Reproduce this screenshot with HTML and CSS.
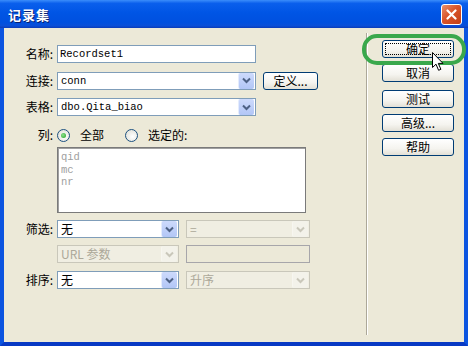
FILE: index.html
```html
<!DOCTYPE html>
<html lang="zh-CN">
<head>
    <meta charset="UTF-8">
    <title>记录集</title>
    <link rel="stylesheet" href="styles.css">
</head>
<body>
    <div class="window">
        <!-- Title bar -->
        <div class="titlebar">
            <span class="title">记录集</span>
            <span class="close-btn">
                <svg width="11" height="11" viewBox="0 0 11 11"><path d="M1.5 1.5 L9.5 9.5 M9.5 1.5 L1.5 9.5" stroke="#fff" stroke-width="2.2" stroke-linecap="round"/></svg>
            </span>
        </div>

        <div class="frame">
            <!-- Form fields on the left -->
            <div class="form-area">
                <div class="row row-name">
                    <label class="label">名称:</label>
                    <div class="textbox wide mono">Recordset1</div>
                </div>
                <div class="row row-conn">
                    <label class="label">连接:</label>
                    <div class="combo wide">
                        <span class="combo-text mono">conn</span>
                        <span class="combo-arrow"><svg width="9" height="7" viewBox="0 0 9 7"><path d="M1 1.5 L4.5 5 L8 1.5" fill="none" stroke="#4d6185" stroke-width="2"/></svg></span>
                    </div>
                    <div class="btn btn-define">定义...</div>
                </div>
                <div class="row row-table">
                    <label class="label">表格:</label>
                    <div class="combo wide">
                        <span class="combo-text mono">dbo.Qita_biao</span>
                        <span class="combo-arrow"><svg width="9" height="7" viewBox="0 0 9 7"><path d="M1 1.5 L4.5 5 L8 1.5" fill="none" stroke="#4d6185" stroke-width="2"/></svg></span>
                    </div>
                </div>
                <div class="row row-cols">
                    <label class="label">列:</label>
                    <span class="radio checked"></span>
                    <span class="radio-text">全部</span>
                    <span class="radio"></span>
                    <span class="radio-text">选定的:</span>
                </div>
                <div class="row row-list">
                    <span class="label"></span>
                    <div class="listbox mono">
                        <div>qid</div>
                        <div>mc</div>
                        <div>nr</div>
                    </div>
                </div>
                <div class="row row-filter">
                    <label class="label">筛选:</label>
                    <div class="combo small">
                        <span class="combo-text">无</span>
                        <span class="combo-arrow"><svg width="9" height="7" viewBox="0 0 9 7"><path d="M1 1.5 L4.5 5 L8 1.5" fill="none" stroke="#4d6185" stroke-width="2"/></svg></span>
                    </div>
                    <div class="combo small2 disabled">
                        <span class="combo-text">=</span>
                        <span class="combo-arrow"><svg width="9" height="7" viewBox="0 0 9 7"><path d="M1 1.5 L4.5 5 L8 1.5" fill="none" stroke="#c9c7ba" stroke-width="2"/></svg></span>
                    </div>
                </div>
                <div class="row row-param">
                    <span class="label"></span>
                    <div class="combo small disabled">
                        <span class="combo-text">URL 参数</span>
                        <span class="combo-arrow"><svg width="9" height="7" viewBox="0 0 9 7"><path d="M1 1.5 L4.5 5 L8 1.5" fill="none" stroke="#c9c7ba" stroke-width="2"/></svg></span>
                    </div>
                    <div class="textbox small2 disabled-box"></div>
                </div>
                <div class="row row-sort">
                    <label class="label">排序:</label>
                    <div class="combo small">
                        <span class="combo-text">无</span>
                        <span class="combo-arrow"><svg width="9" height="7" viewBox="0 0 9 7"><path d="M1 1.5 L4.5 5 L8 1.5" fill="none" stroke="#4d6185" stroke-width="2"/></svg></span>
                    </div>
                    <div class="combo small2 disabled">
                        <span class="combo-text">升序</span>
                        <span class="combo-arrow"><svg width="9" height="7" viewBox="0 0 9 7"><path d="M1 1.5 L4.5 5 L8 1.5" fill="none" stroke="#c9c7ba" stroke-width="2"/></svg></span>
                    </div>
                </div>
            </div>

            <!-- Buttons on the right -->
            <div class="button-panel">
                <div class="btn focused"><span class="focus-ring">确定</span></div>
                <div class="btn">取消</div>
                <div class="btn gap-top">测试</div>
                <div class="btn">高级...</div>
                <div class="btn">帮助</div>
            </div>
        </div>

        <!-- Annotation ring and mouse pointer -->
        <div class="highlight"></div>
        <svg class="cursor" width="13" height="20" viewBox="0 0 13 20">
            <path d="M0.5 0.5 L0.5 15.5 L4 12.2 L6.6 18.3 L8.9 17.3 L6.3 11.4 L11 11.4 Z" fill="#fff" stroke="#000" stroke-width="1" stroke-linejoin="miter"/>
        </svg>
    </div>
</body>
</html>
```

FILE: styles.css
```css
/* XP style dialog */
body {
    margin: 0;
    padding: 0;
    font-family: "Noto Sans CJK SC", sans-serif;
    font-size: 12px;
    color: #000;
    background-color: #ece9d8;
    overflow: hidden;
}
.window {
    position: relative;
    width: 468px;
    height: 346px;
    display: flex;
    flex-direction: column;
}
.titlebar {
    height: 28px;
    display: flex;
    align-items: center;
    justify-content: space-between;
    padding: 0 6px 0 8px;
    background: linear-gradient(#3b8dfb 0%, #0a5fec 12%, #0055e5 45%, #0050df 80%, #0a4fd8 92%, #0b3cb8 100%);
}
.title {
    color: #fff;
    font-weight: bold;
    font-size: 13px;
    letter-spacing: 1px;
    text-shadow: 1px 1px 0 #0a1e6e;
    padding-top: 1px;
}
.close-btn {
    width: 19px;
    height: 19px;
    border: 1px solid #fff;
    border-radius: 3px;
    background: linear-gradient(135deg, #e9906d 0%, #d9542a 45%, #c23f16 100%);
    display: flex;
    align-items: center;
    justify-content: center;
    margin-top: 1px;
}
.frame {
    flex: 1;
    display: flex;
    background-color: #ece9d8;
    border-left: 4px solid #0b54e0;
    border-right: 4px solid #0b54e0;
    border-bottom: 4px solid #0839c4;
}
.form-area {
    width: 362px;
    padding-top: 17px;
    display: flex;
    flex-direction: column;
}
.row {
    display: flex;
    align-items: center;
}
.row-conn, .row-table { margin-top: 8px; }
.row-cols { margin-top: 12px; height: 14px; }
.row-list { margin-top: 5px; align-items: flex-start; }
.row-filter { margin-top: 7px; }
.row-param { margin-top: 7px; }
.row-sort { margin-top: 8px; }
.label {
    width: 49px;
    margin-right: 4px;
    text-align: right;
    line-height: 16px;
    flex-shrink: 0;
}
.mono {
    font-family: "Liberation Mono", "Noto Sans CJK SC", monospace;
    font-size: 10.5px;
}
.textbox {
    height: 18px;
    box-sizing: border-box;
    border: 1px solid #7f9db9;
    background-color: #fff;
    padding-left: 2px;
    line-height: 16px;
}
.wide { width: 199px; }
.small { width: 122px; }
.small2 { width: 124px; margin-left: 7px; }
.combo {
    height: 18px;
    box-sizing: border-box;
    border: 1px solid #7f9db9;
    background-color: #fff;
    display: flex;
}
.combo-text {
    flex: 1;
    padding-left: 3px;
    line-height: 16px;
    white-space: nowrap;
    overflow: hidden;
}
.combo-arrow {
    width: 15px;
    margin: 0 1px 0 0;
    border-left: 1px solid #e4ecfd;
    background: linear-gradient(#cddafc, #b2c6f6);
    border-radius: 2px;
    display: flex;
    align-items: center;
    justify-content: center;
}
.combo.disabled {
    border-color: #c9c7ba;
    background-color: #f0eee2;
    color: #aca899;
}
.combo.disabled .combo-arrow {
    background: #f3f2ea;
    border-left-color: #f7f6f0;
}
.disabled-box {
    border-color: #a7a6aa;
    background-color: #ece9d8;
}
.btn {
    box-sizing: border-box;
    height: 18px;
    border: 1px solid #003c74;
    border-radius: 3px;
    background: linear-gradient(#ffffff 0%, #f5f4ef 60%, #e3e0d6 100%);
    text-align: center;
    line-height: 16px;
    cursor: pointer;
}
.btn-define {
    width: 55px;
    margin-left: 7px;
    margin-top: 1px;
}
.radio {
    width: 11px;
    height: 11px;
    border: 1px solid #1c5180;
    border-radius: 50%;
    background: radial-gradient(circle at 60% 60%, #ffffff 0%, #e6e6df 70%, #cdcdc4 100%);
    flex-shrink: 0;
    position: relative;
}
.radio.checked::after {
    content: "";
    position: absolute;
    left: 3px;
    top: 3px;
    width: 5px;
    height: 5px;
    border-radius: 50%;
    background: radial-gradient(circle at 40% 40%, #8fe08f, #21a121);
}
.radio-text {
    margin-left: 10px;
    margin-right: 21px;
    line-height: 16px;
}
.listbox {
    width: 249px;
    height: 66px;
    box-sizing: border-box;
    border: 1px solid #7a7a7a;
    box-shadow: inset 1px 1px 0 #a0a0a0;
    background-color: #fff;
    color: #a0a0a0;
    padding: 3px 0 0 3px;
    line-height: 12.5px;
}
.button-panel {
    flex: 1;
    margin: 5px 0 7px;
    border-left: 1px solid #aca899;
    box-shadow: inset 1px 0 0 #fff;
    padding: 7px 0 0 15px;
    display: flex;
    flex-direction: column;
    gap: 6px;
}
.button-panel .btn { width: 72px; }
.button-panel .gap-top { margin-top: 2px; }
.btn.focused {
    padding: 2px;
}
.focus-ring {
    display: block;
    border: 1px dotted #000;
    line-height: 10px;
    height: 10px;
}
.highlight {
    position: absolute;
    left: 362px;
    top: 34px;
    width: 104px;
    height: 31px;
    box-sizing: border-box;
    border: 4px solid #3aa84c;
    border-radius: 15px;
}
.cursor {
    position: absolute;
    left: 432px;
    top: 52px;
}
```
